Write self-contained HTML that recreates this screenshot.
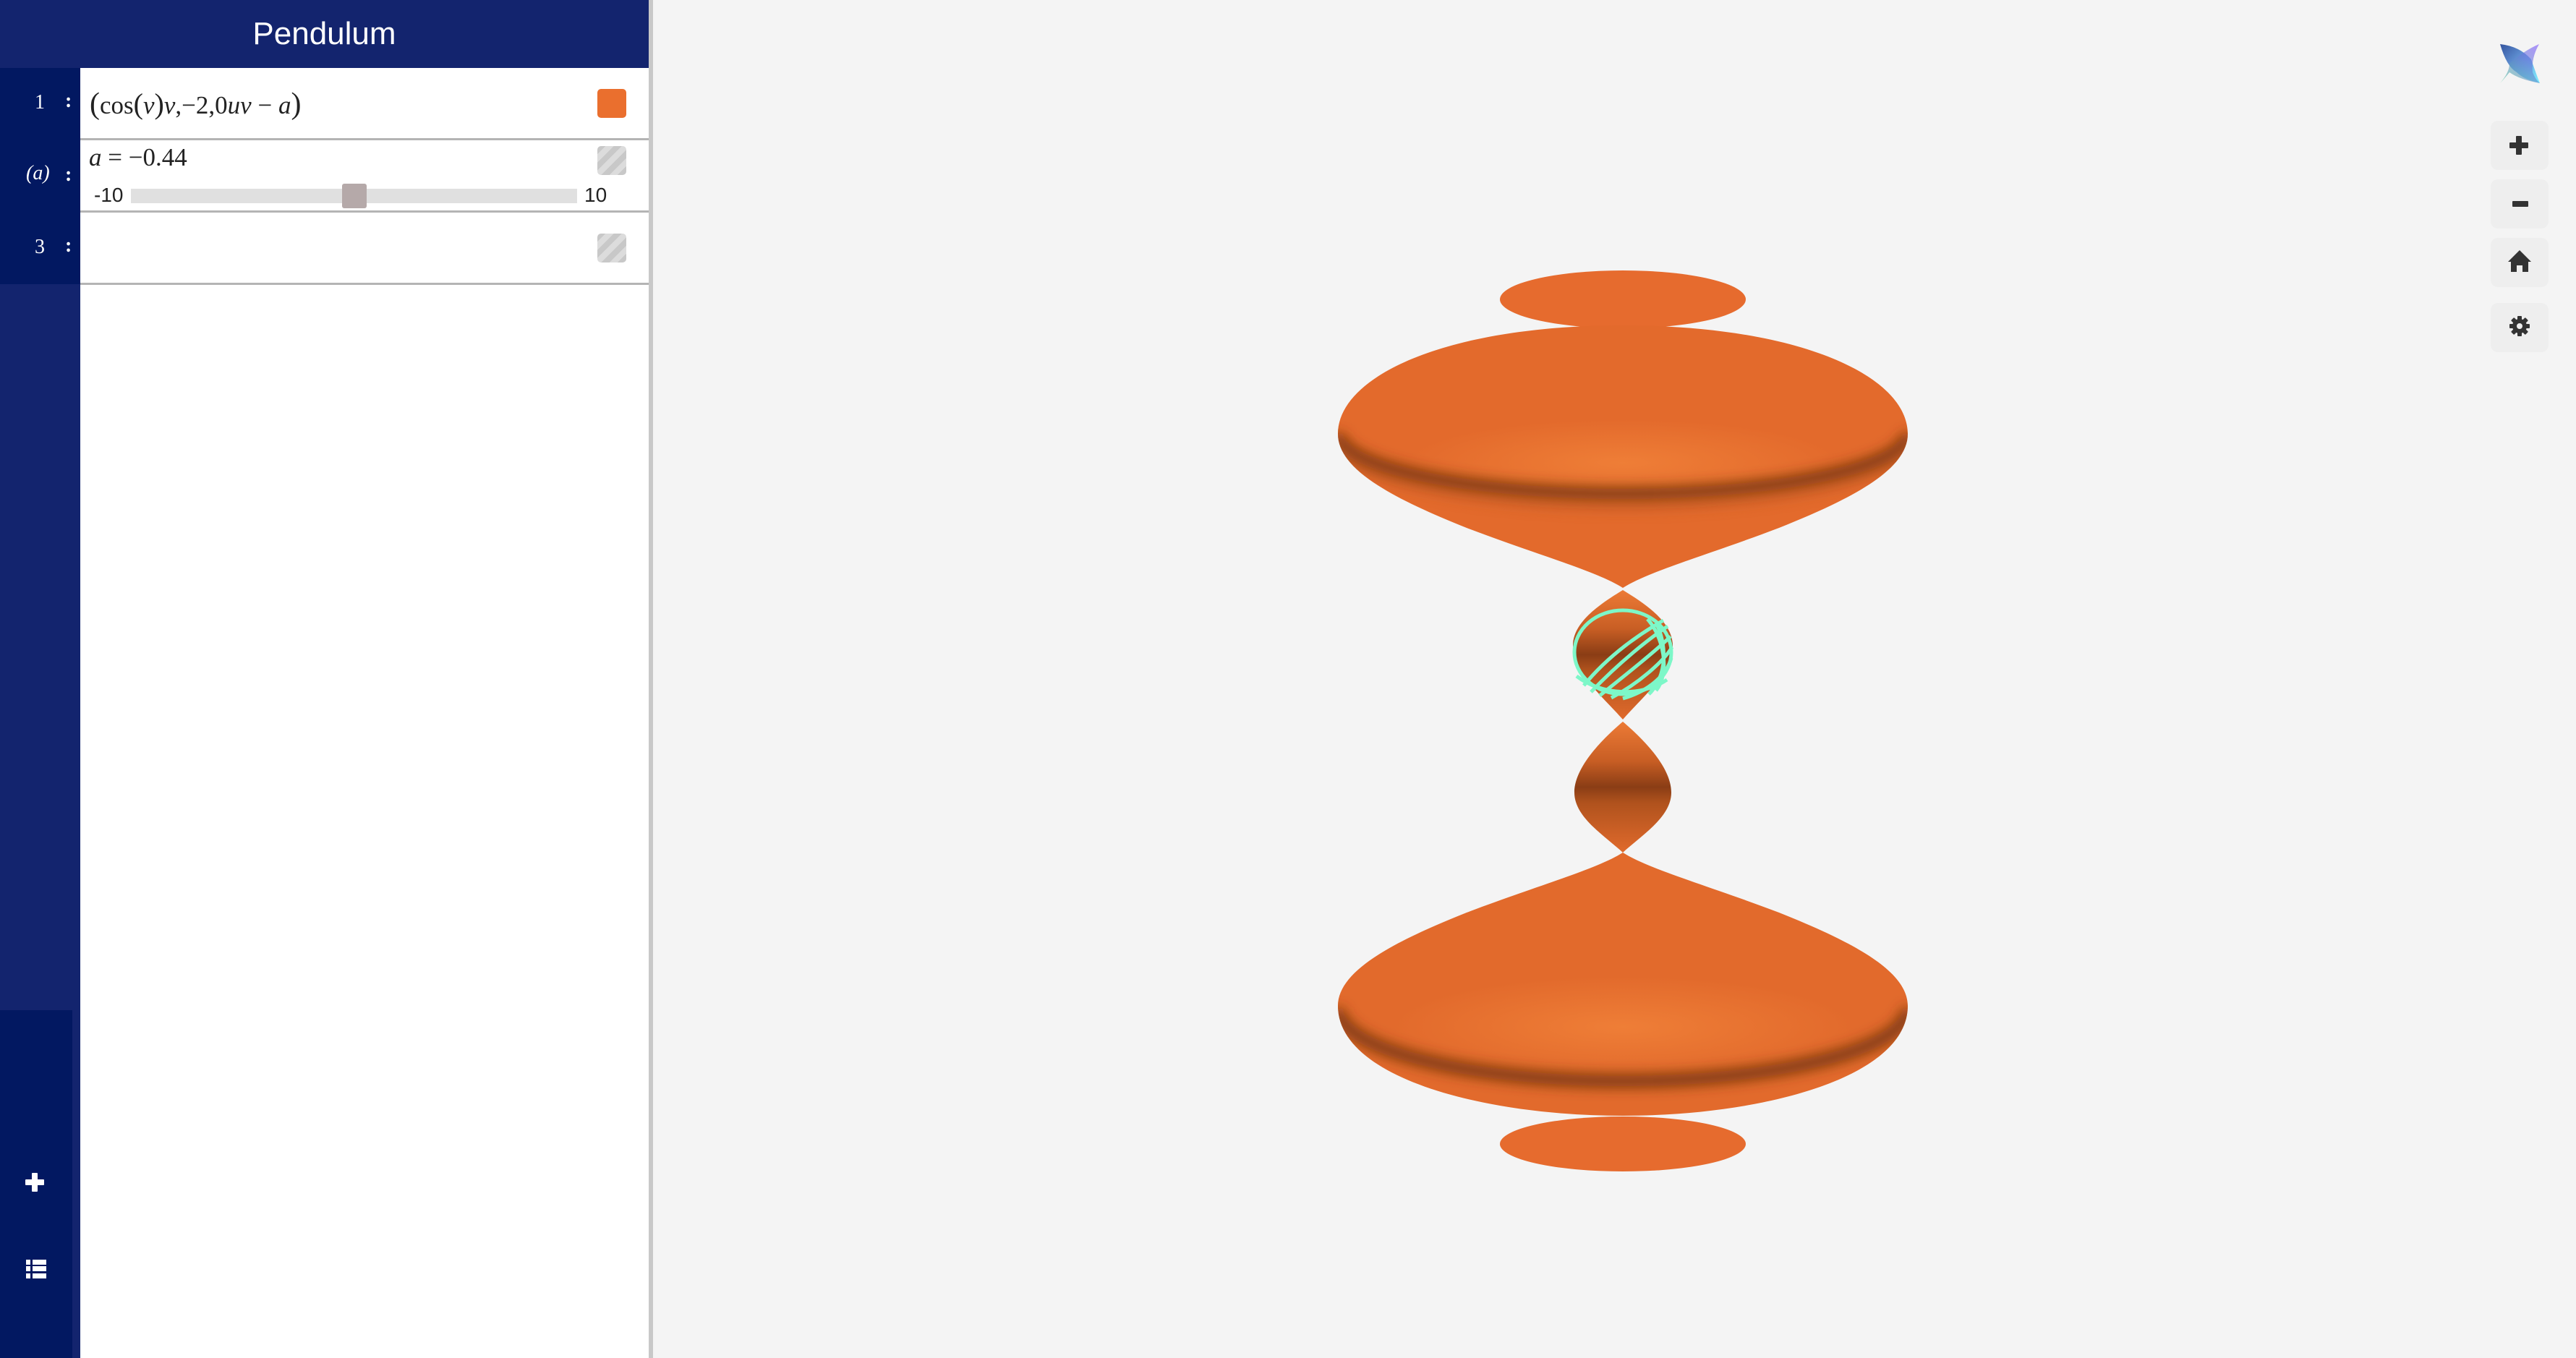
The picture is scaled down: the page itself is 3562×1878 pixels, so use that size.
<!DOCTYPE html>
<html><head><meta charset="utf-8"><style>
html,body{margin:0;padding:0;width:3562px;height:1878px;overflow:hidden;background:#f4f4f4;font-family:"Liberation Sans",sans-serif}
.abs{position:absolute}
#panel{left:0;top:0;width:897px;height:1878px;background:#fff}
#hdr{left:0;top:0;width:897px;height:94px;background:#13246e;color:#fff;font-size:44px;text-align:center;line-height:94px}
#sideL{left:0;top:94px;width:111px;height:1784px;background:#13246e}
#sideR{left:0;top:94px;width:111px;height:299px;background:#021861}
#sideB{left:0;top:1397px;width:100px;height:481px;background:#021861}
#border{left:897px;top:0;width:6px;height:1878px;background:#c8c8c8}
.row{left:111px;width:786px;border-bottom:3px solid #b4b4b4}
.lbl{color:#fff;font-family:"Liberation Serif",serif;font-size:28px}
.sw{left:826px;width:40px;height:40px;border-radius:5px}
.st{background:repeating-linear-gradient(135deg,#c8c8c8 0 8px,#dcdcdc 8px 16px)}
.math{font-family:"Liberation Serif",serif;color:#222;font-size:35px}
.btn{left:3444px;width:80px;height:68px;background:#eeeeee;border-radius:10px}
</style></head><body>
<div id="panel" class="abs"></div>
<div id="sideL" class="abs"></div>
<div id="sideR" class="abs"></div>
<div id="sideB" class="abs"></div>
<div id="hdr" class="abs">Pendulum</div>
<div id="border" class="abs"></div>

<div class="abs row" style="top:94px;height:97px"></div>
<div class="abs row" style="top:194px;height:97px"></div>
<div class="abs row" style="top:294px;height:97px"></div>

<div class="abs lbl" style="left:48px;top:126px">1</div>
<div class="abs lbl" style="left:90px;top:124px;font-weight:bold">:</div>
<div class="abs lbl" style="left:36px;top:224px;font-style:italic">(a)</div>
<div class="abs lbl" style="left:90px;top:226px;font-weight:bold">:</div>
<div class="abs lbl" style="left:48px;top:326px">3</div>
<div class="abs lbl" style="left:90px;top:324px;font-weight:bold">:</div>

<div class="abs math" style="left:124px;top:120px"><span style="font-size:42px">(</span>cos<span style="font-size:40px">(</span><i>v</i><span style="font-size:40px">)</span><i>v</i>,−2,0<i>uv</i> − <i>a</i><span style="font-size:42px">)</span></div>
<div class="abs sw" style="top:123px;background:#ea6f2e"></div>
<div class="abs math" style="left:123px;top:198px"><i>a</i> = −0.44</div>
<div class="abs sw st" style="top:202px"></div>
<div class="abs" style="left:130px;top:254px;font-size:28px;color:#222">-10</div>
<div class="abs" style="left:181px;top:261px;width:617px;height:20px;background:#e0e0e0"></div>
<div class="abs" style="left:473px;top:254px;width:34px;height:34px;background:#b5a9a9;border-radius:3px"></div>
<div class="abs" style="left:808px;top:254px;font-size:28px;color:#222">10</div>
<div class="abs sw st" style="top:323px"></div>

<svg class="abs" style="left:0;top:0" width="3562" height="1878">
  <rect x="44" y="1622" width="8" height="26" fill="#fff" rx="1"/>
  <rect x="35" y="1631" width="26" height="8" fill="#fff" rx="1"/>
  <g fill="#fff"><rect x="36" y="1742" width="6" height="7"/><rect x="45" y="1742" width="19" height="7"/>
  <rect x="36" y="1751" width="6" height="7"/><rect x="45" y="1751" width="19" height="7"/>
  <rect x="36" y="1761" width="6" height="7"/><rect x="45" y="1761" width="19" height="7"/></g>

  <defs>
    <radialGradient id="hl" cx="0.5" cy="0.5" r="0.5"><stop offset="0" stop-color="#f08038" stop-opacity="0.9"/><stop offset="1" stop-color="#f08038" stop-opacity="0"/></radialGradient>
    <linearGradient id="gBall" x1="0" y1="0" x2="0" y2="1">
      <stop offset="0" stop-color="#ec7a36"/><stop offset="0.3" stop-color="#c85e24"/>
      <stop offset="0.5" stop-color="#8a3d15"/><stop offset="0.62" stop-color="#b0521d"/>
      <stop offset="1" stop-color="#e06a2c"/>
    </linearGradient>
    <filter id="bl" x="-10%" y="-50%" width="120%" height="200%"><feGaussianBlur stdDeviation="9"/></filter>
    <clipPath id="cTop"><path id="pTop" d="M1850,600 C1850,520 2000,450 2244,450 C2488,450 2638,520 2638,600 C2638,650 2560,690 2460,730 C2360,768 2280,790 2244,813 C2208,790 2128,768 2028,730 C1928,690 1850,650 1850,600Z"/></clipPath>
    <clipPath id="cBot"><path d="M2244,1179 C2280,1202 2360,1224 2460,1262 C2560,1302 2638,1342 2638,1391 C2638,1490 2438,1543 2244,1543 C2050,1543 1850,1490 1850,1391 C1850,1342 1928,1302 2028,1262 C2128,1224 2208,1202 2244,1179Z"/></clipPath>
  </defs>
  <ellipse cx="2244" cy="414" rx="170" ry="40" fill="#e66b2e"/>
  <g clip-path="url(#cTop)">
    <rect x="1840" y="440" width="810" height="380" fill="#e36a2c"/>
    <ellipse cx="2244" cy="640" rx="300" ry="60" fill="url(#hl)"/>
    <path d="M1850,600 A394,83 0 0 0 2638,600" fill="none" stroke="#6e300f" stroke-width="16" filter="url(#bl)"/>
    <path d="M1850,612 A394,88 0 0 0 2638,612" fill="none" stroke="#b05220" stroke-width="10" filter="url(#bl)" opacity="0.5"/>
  </g>
  <path d="M2244,816 C2275,835 2313,860 2313,893 C2313,930 2270,965 2244,995 C2218,965 2175,930 2175,893 C2175,860 2213,835 2244,816Z" fill="url(#gBall)"/>
  <g fill="none" stroke="#7df7c8" stroke-width="5">
    <ellipse cx="2244" cy="902" rx="67" ry="58"/>
    <path d="M2190,948 C2225,905 2270,875 2300,858"/>
    <path d="M2200,957 C2240,915 2282,882 2306,866"/>
    <path d="M2212,962 C2252,930 2292,898 2310,880"/>
    <path d="M2228,965 C2266,945 2300,915 2312,895"/>
    <path d="M2244,966 C2282,955 2305,932 2311,910"/>
    <path d="M2180,935 C2215,962 2270,964 2305,940"/>
    <path d="M2278,856 C2300,880 2310,930 2290,955"/>
    <path d="M2290,862 C2305,890 2306,935 2280,960"/>
  </g>
  <path d="M2244,998 C2270,1020 2311,1060 2311,1096 C2311,1130 2270,1155 2244,1179 C2218,1155 2177,1130 2177,1096 C2177,1060 2218,1020 2244,998Z" fill="url(#gBall)"/>
  <g clip-path="url(#cBot)">
    <rect x="1840" y="1170" width="810" height="380" fill="#e26a2c"/>
    <ellipse cx="2244" cy="1420" rx="320" ry="70" fill="url(#hl)"/>
    <path d="M1850,1395 A394,100 0 0 0 2638,1395" fill="none" stroke="#6e300f" stroke-width="16" filter="url(#bl)"/>
  </g>
  <ellipse cx="2244" cy="1582" rx="170" ry="38" fill="#e66b2e"/>

  <defs>
    <linearGradient id="lg1" x1="0" y1="0" x2="1" y2="1"><stop offset="0" stop-color="#34549e"/><stop offset="0.5" stop-color="#6aa0e0"/><stop offset="1" stop-color="#7ff4ff"/></linearGradient>
    <linearGradient id="lg2" x1="1" y1="0" x2="0" y2="1"><stop offset="0" stop-color="#7a4cff"/><stop offset="1" stop-color="#4fc79a"/></linearGradient>
  </defs>
  <path d="M3457,61 Q3484,64 3500,82 Q3506,100 3512,115 Q3490,110 3480,100 Q3466,92 3457,61Z" fill="url(#lg1)"/>
  <path d="M3511,61 Q3500,80 3502,100 Q3506,110 3512,115 Q3484,110 3470,100 Q3462,110 3457,115 Q3470,100 3470,88 Q3490,70 3511,61Z" fill="url(#lg2)" opacity="0.6"/>
</svg>

<div class="abs btn" style="top:167px"></div>
<div class="abs btn" style="top:248px"></div>
<div class="abs btn" style="top:329px"></div>
<div class="abs btn" style="top:419px"></div>
<svg class="abs" style="left:0;top:0" width="3562" height="1878">
  <g fill="#333">
    <rect x="3479" y="188" width="8" height="26" rx="1"/><rect x="3470" y="197" width="26" height="8" rx="1"/>
    <rect x="3474" y="278" width="22" height="8" rx="1"/>
    <path d="M3484,346 L3500,362 L3496,362 L3496,376 L3488,376 L3488,367 L3480,367 L3480,376 L3472,376 L3472,362 L3468,362Z"/>
    <circle cx="3484" cy="451" r="10"/>
    <g transform="translate(3484,451)">
      <rect x="-3" y="-14" width="6" height="28" rx="1"/>
      <rect x="-3" y="-14" width="6" height="28" rx="1" transform="rotate(45)"/>
      <rect x="-3" y="-14" width="6" height="28" rx="1" transform="rotate(90)"/>
      <rect x="-3" y="-14" width="6" height="28" rx="1" transform="rotate(135)"/>
    </g>
    <circle cx="3484" cy="451" r="4" fill="#eeeeee"/>
  </g>
</svg>
</body></html>
